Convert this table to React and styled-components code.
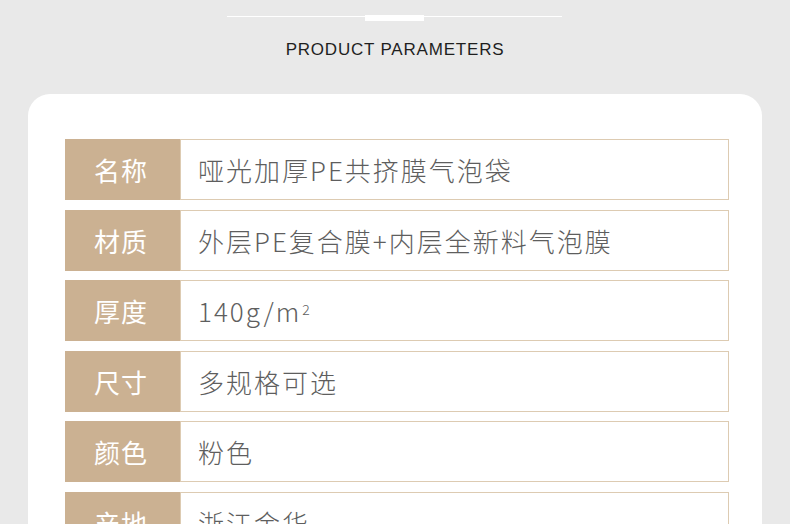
import React from 'react';
import styled, { createGlobalStyle } from 'styled-components';

const GlobalStyle = createGlobalStyle`
  html, body {
    margin: 0;
    padding: 0;
    background: #e9e9e9;
    overflow: hidden;
  }
  body {
    font-family: 'Noto Sans', 'Noto Sans CJK SC', sans-serif;
  }
  * {
    box-sizing: border-box;
  }
`;

const Page = styled.div`
  width: 790px;
  height: 524px;
  overflow: hidden;
`;

const Header = styled.header`
  display: flex;
  flex-direction: column;
  align-items: center;
  padding-top: 16px;
`;

const Divider = styled.div`
  position: relative;
  width: 335px;
  height: 1px;
  margin-left: -1px;
  background: #ffffff;
`;

const DividerMark = styled.span`
  position: absolute;
  left: 138px;
  top: -1px;
  width: 59px;
  height: 6px;
  background: #ffffff;
`;

const Title = styled.h2`
  margin: 22px 0 0;
  font-family: 'Liberation Sans', Arial, sans-serif;
  font-weight: 400;
  font-size: 17px;
  letter-spacing: 0.8px;
  color: #1f1f1f;
  line-height: 22px;
`;

const Card = styled.section`
  margin: 33px 28px 0;
  background: #ffffff;
  border-radius: 22px 22px 0 0;
  padding: 45px 33px 0 37px;
  display: flex;
  flex-direction: column;
  gap: 9.6px;
  min-height: 500px;
`;

const Row = styled.div`
  display: flex;
  height: 61px;
  flex-shrink: 0;
`;

const Label = styled.div`
  width: 115px;
  flex-shrink: 0;
  background: #cbb192;
  color: #ffffff;
  display: flex;
  align-items: center;
  justify-content: center;
  font-family: 'Noto Sans CJK SC', sans-serif;
  font-size: 26px;
  letter-spacing: 1px;
  padding-right: 3px;
`;

const Value = styled.div`
  flex: 1;
  border: 1.5px solid #ddcbb2;
  display: flex;
  align-items: center;
  padding-left: 17px;
  font-family: 'Noto Sans CJK SC', sans-serif;
  font-weight: 300;
  font-size: 26px;
  letter-spacing: 2px;
  color: #5e5e5e;
`;

const Sup = styled.sup`
  font-size: 14px;
  position: relative;
  top: -2px;
  margin-left: 1px;
`;

const params = [
  { label: '名称', value: '哑光加厚PE共挤膜气泡袋' },
  { label: '材质', value: '外层PE复合膜+内层全新料气泡膜' },
  { label: '厚度', value: <>140g/m<Sup>2</Sup></> },
  { label: '尺寸', value: '多规格可选' },
  { label: '颜色', value: '粉色' },
  { label: '产地', value: '浙江金华' },
];

export default function App() {
  return (
    <Page>
      <GlobalStyle />
      <Header>
        <Divider>
          <DividerMark />
        </Divider>
        <Title>PRODUCT PARAMETERS</Title>
      </Header>
      <Card>
        {params.map((p) => (
          <Row key={p.label}>
            <Label>{p.label}</Label>
            <Value>{p.value}</Value>
          </Row>
        ))}
      </Card>
    </Page>
  );
}
